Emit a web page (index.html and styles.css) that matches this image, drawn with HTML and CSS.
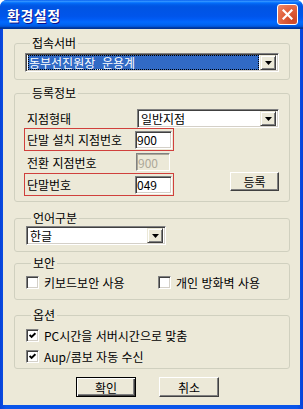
FILE: index.html
```html
<!DOCTYPE html>
<html lang="ko">
<head>
    <meta charset="UTF-8">
    <title>환경설정</title>
    <link rel="stylesheet" href="styles.css">
</head>
<body>
    <div class="window">
        <div class="titlebar">
            <span class="title">환경설정</span>
            <span class="close">
                <svg width="11" height="11" viewBox="0 0 11 11"><path d="M1.5 1.5 L9.5 9.5 M9.5 1.5 L1.5 9.5" stroke="#fff" stroke-width="2.2" stroke-linecap="square"/></svg>
            </span>
        </div>
        <div class="client">
            <fieldset class="group g-server">
                <legend>접속서버</legend>
                <div class="combo">
                    <span class="combo-text selected">동부선진원장_운용계</span>
                    <span class="combo-btn"><svg width="7" height="4" viewBox="0 0 7 4"><path d="M0 0 H7 L3.5 4 Z" fill="#000"/></svg></span>
                </div>
            </fieldset>

            <fieldset class="group g-reg">
                <legend>등록정보</legend>
                <div class="row">
                    <span class="lbl">지점형태</span>
                    <div class="combo combo-branch">
                        <span class="combo-text">일반지점</span>
                        <span class="combo-btn"><svg width="7" height="4" viewBox="0 0 7 4"><path d="M0 0 H7 L3.5 4 Z" fill="#000"/></svg></span>
                    </div>
                </div>
                <div class="row">
                    <div class="mark">
                        <span class="lbl">단말 설치 지점번호</span>
                        <input class="field" type="text" value="900">
                    </div>
                </div>
                <div class="row row-plain">
                    <span class="lbl">전환 지점번호</span>
                    <input class="field field-off" type="text" value="900" disabled>
                </div>
                <div class="row row-last">
                    <div class="mark">
                        <span class="lbl">단말번호</span>
                        <input class="field" type="text" value="049">
                    </div>
                    <button class="btn btn-reg">등록</button>
                </div>
            </fieldset>

            <fieldset class="group g-lang">
                <legend>언어구분</legend>
                <div class="combo combo-lang">
                    <span class="combo-text">한글</span>
                    <span class="combo-btn"><svg width="7" height="4" viewBox="0 0 7 4"><path d="M0 0 H7 L3.5 4 Z" fill="#000"/></svg></span>
                </div>
            </fieldset>

            <fieldset class="group g-sec">
                <legend>보안</legend>
                <div class="checks-inline">
                    <label class="check check-kbd"><span class="box"></span>키보드보안 사용</label>
                    <label class="check"><span class="box"></span>개인 방화벽 사용</label>
                </div>
            </fieldset>

            <fieldset class="group g-opt">
                <legend>옵션</legend>
                <label class="check"><span class="box"><svg width="7" height="7" viewBox="0 0 7 7"><path d="M0.6 3 L2.6 5 L6.4 1.2" stroke="#000" stroke-width="1.9" fill="none"/></svg></span>PC시간을 서버시간으로 맞춤</label>
                <label class="check"><span class="box"><svg width="7" height="7" viewBox="0 0 7 7"><path d="M0.6 3 L2.6 5 L6.4 1.2" stroke="#000" stroke-width="1.9" fill="none"/></svg></span>Aup/콤보 자동 수신</label>
            </fieldset>

            <div class="actions">
                <button class="btn btn-default">확인</button>
                <button class="btn">취소</button>
            </div>
        </div>
    </div>
</body>
</html>
```

FILE: styles.css
```css
body {
    margin: 0;
    font-family: "Noto Sans CJK KR", "Noto Sans", sans-serif;
    font-size: 12px;
    color: #000;
    background: #fff;
}

.window {
    width: 303px;
    height: 409px;
    box-sizing: border-box;
    display: flex;
    flex-direction: column;
    background: linear-gradient(to right, #0842d8, #0a55ea 2%, #0a55ea 98%, #0842d8);
    border-radius: 7px 7px 0 0;
    overflow: hidden;
}

.titlebar {
    height: 29px;
    flex: none;
    display: flex;
    align-items: center;
    justify-content: space-between;
    padding: 0 5px 0 7px;
    background: linear-gradient(to bottom, #0058ee 0%, #3593ff 4%, #288eff 6%, #127dff 8%, #036ffc 10%, #0262ee 14%, #0057e5 20%, #0054e3 24%, #0055eb 56%, #005bf5 66%, #026afe 76%, #0062ef 86%, #0052d6 92%, #0040ab 94%, #003092 100%);
}

.title {
    color: #fff;
    font-weight: bold;
    font-size: 14px;
    letter-spacing: 0.5px;
    text-shadow: 1px 1px #0f1089;
}

.close {
    width: 21px;
    height: 21px;
    box-sizing: border-box;
    border: 1px solid #fff;
    border-radius: 3px;
    background: radial-gradient(circle at 80% 80%, #cc4626, #e0603c 50%, #f08a6a);
    display: flex;
    align-items: center;
    justify-content: center;
}

.client {
    flex: 1;
    margin: 0 3px 4px;
    padding: 0 10px 0 11px;
    background: #ece9d8;
}

/* group boxes */
.group {
    margin: 0;
    padding: 0;
    border: 1px solid #d0d0bf;
    border-radius: 3px;
    min-width: 0;
}

.group legend {
    margin-left: 5px;
    padding: 0 2px;
    line-height: 14px;
}

.g-server {
    margin-top: 7px;
    padding: 3px 10px 7px 10px;
}

.g-reg {
    margin-top: 6px;
    padding: 9px 10px 5px 9px;
}

.g-reg legend {
    margin-left: 6px;
}

.g-lang {
    margin-top: 9px;
    padding: 1px 10px 6px 11px;
}

.g-sec {
    margin-top: 4px;
    padding: 4px 10px 9px 11px;
}

.g-opt {
    margin-top: 8px;
    padding: 5px 10px 4px 11px;
}

/* combo boxes */
.combo {
    height: 19px;
    box-sizing: border-box;
    display: flex;
    align-items: stretch;
    padding: 1px 2px;
    background: #fff;
    border: 1px solid;
    border-color: #808080 #fff #fff #808080;
    box-shadow: inset 1px 1px #404040, inset -1px -1px #d4d0c8;
}

.combo-text {
    flex: 1;
    line-height: 15px;
    padding-left: 1px;
    white-space: nowrap;
    overflow: hidden;
}

.combo-text.selected {
    background: #316ac5;
    color: #fff;
    outline: 1px dotted #000;
    outline-offset: -1px;
    margin-right: 1px;
}

.combo-btn {
    width: 16px;
    box-sizing: border-box;
    display: flex;
    align-items: center;
    justify-content: center;
    background: #ece9d8;
    border: 1px solid;
    border-color: #ece9d8 #404040 #404040 #ece9d8;
    box-shadow: inset 1px 1px #fff, inset -1px -1px #808080;
}

.combo-branch {
    flex: 1;
    margin-left: 1px;
}

.combo-lang {
    width: 140px;
}

/* registration rows */
.row {
    display: flex;
    align-items: center;
}

.lbl {
    width: 109px;
    padding-left: 3px;
    flex: none;
    white-space: nowrap;
}

.row-plain {
    height: 22px;
}

.mark {
    width: 150px;
    height: 23px;
    box-sizing: border-box;
    display: flex;
    align-items: center;
    border: 1px solid #d0403c;
}

.mark .lbl {
    width: 108px;
    padding-left: 2px;
}

.field {
    width: 37px;
    height: 18px;
    box-sizing: border-box;
    margin: 0;
    padding: 0 1px;
    font: inherit;
    font-size: 12px;
    color: #000;
    background: #fff;
    border: 1px solid;
    border-color: #808080 #fff #fff #808080;
    box-shadow: inset 1px 1px #404040, inset -1px -1px #d4d0c8;
}

.field-off {
    width: 34px;
    color: #aca899;
    background: #ece9d8;
    box-shadow: inset 1px 1px #aca899;
}

.row-last {
    align-items: flex-start;
}

/* buttons */
.btn {
    width: 60px;
    height: 20px;
    padding: 0;
    font: inherit;
    font-size: 12px;
    color: #000;
    background: #ece9d8;
    border: 1px solid;
    border-color: #fff #404040 #404040 #fff;
    box-shadow: inset -1px -1px #808080;
}

.btn-reg {
    width: 49px;
    height: 19px;
    margin-left: auto;
    margin-top: -1px;
}

.btn-default {
    border: 1px solid #000;
    box-shadow: inset 1px 1px #fff, inset -1px -1px #404040, inset -2px -2px #808080;
}

.actions {
    display: flex;
    justify-content: center;
    gap: 23px;
    margin-top: 8px;
    padding-right: 9px;
}

/* checkboxes */
.checks-inline {
    display: flex;
}

.check {
    display: flex;
    align-items: center;
    height: 16px;
    white-space: nowrap;
}

.check-kbd {
    width: 132px;
}

.g-opt .check + .check {
    margin-top: 5px;
}

.box {
    width: 13px;
    height: 13px;
    box-sizing: border-box;
    margin-right: 5px;
    display: flex;
    align-items: center;
    justify-content: center;
    background: #fff;
    border: 1px solid;
    border-color: #808080 #fff #fff #808080;
    box-shadow: inset 1px 1px #404040, inset -1px -1px #d4d0c8;
}
```
